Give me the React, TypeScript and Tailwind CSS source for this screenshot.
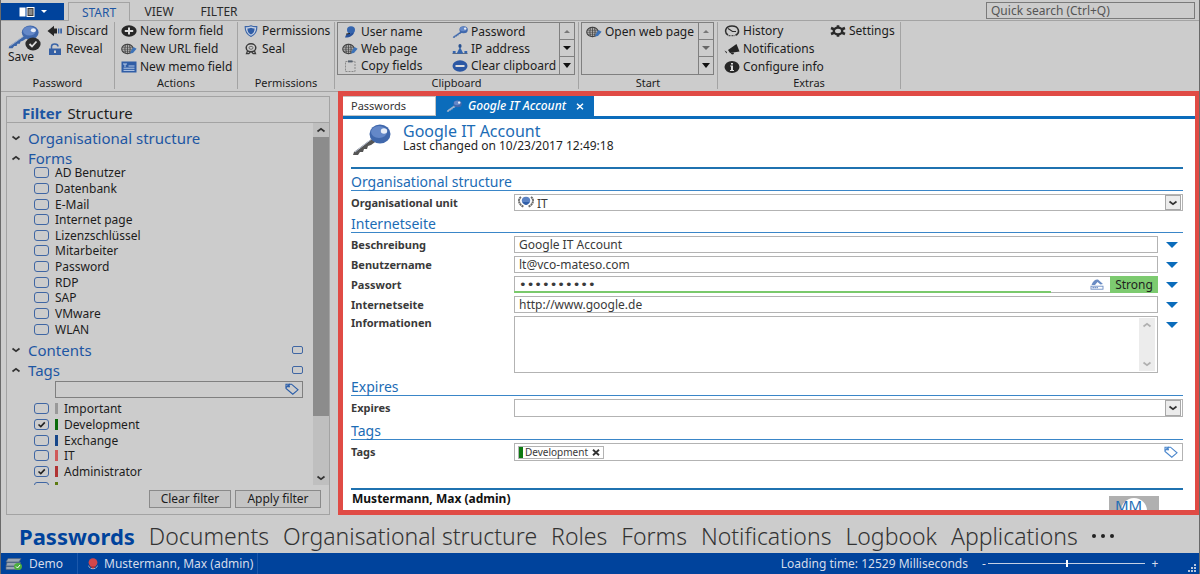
import { useState } from 'react';
import type { ReactNode } from 'react';
import clsx from 'clsx';

const FORMS = ['AD Benutzer', 'Datenbank', 'E-Mail', 'Internet page', 'Lizenzschlüssel', 'Mitarbeiter', 'Password', 'RDP', 'SAP', 'VMware', 'WLAN'];

const TAGS = [
    { name: 'Important', color: 'bg-[#999999]' },
    { name: 'Development', color: 'bg-[#0a6a0a]' },
    { name: 'Exchange', color: 'bg-[#17478a]' },
    { name: 'IT', color: 'bg-[#d05a5a]' },
    { name: 'Administrator', color: 'bg-[#b03333]' },
    { name: '', color: 'bg-[#5c7a10]' },
];

const MODULES = ['Passwords', 'Documents', 'Organisational structure', 'Roles', 'Forms', 'Notifications', 'Logbook', 'Applications'];

/* ---------- Icons ---------- */

function KeyIcon({ className, shaft = '#3c66a8' }: { className: string; shaft?: string }) {
    return (
        <svg viewBox="0 0 40 32" preserveAspectRatio="none" className={className} aria-hidden="true">
            <path d="M23 13 L3 28 L2 31 L7 31 L9 28 L12 28 L13 25 L16 25 L17 22 L20 21 L27 16 Z" fill={shaft} />
            <path d="M22 14 L4 28" stroke="#b9c3d6" strokeWidth="1" />
            <ellipse cx="29" cy="10" rx="10.5" ry="9.5" fill="#4068ac" />
            <ellipse cx="28" cy="8" rx="8" ry="6" fill="#6488c8" />
            <ellipse cx="33" cy="7" rx="3.2" ry="2.8" fill="#e8eef8" />
        </svg>
    );
}

function SaveIcon() {
    return (
        <span className="relative block h-6 w-8">
            <KeyIcon className="h-6 w-8" />
            <svg viewBox="0 0 16 14" className="absolute -right-0.5 -bottom-0.5 h-3.5 w-4" aria-hidden="true">
                <ellipse cx="8" cy="7" rx="7.6" ry="6.4" fill="#2b2b2b" />
                <path d="M4.5 7 L7 9.5 L11.5 4.5" fill="none" stroke="#dddddd" strokeWidth="1.8" />
            </svg>
        </span>
    );
}

function DiscardIcon() {
    return (
        <svg viewBox="0 0 16 12" className="h-3 w-4" aria-hidden="true">
            <path d="M0.5 6 L7 0.8 V3.5 H10 V8.5 H7 V11.2 Z" fill="#262626" />
            <path d="M11 3.5 H12.4 V8.5 H11 Z M13.2 3.5 H15 V8.5 H13.2 Z" fill="#3c66a8" />
        </svg>
    );
}

function LockIcon() {
    return (
        <svg viewBox="0 0 16 12" className="h-3 w-4" aria-hidden="true">
            <path d="M4.5 6 V3.5 C4.5 0.2 11 0.2 11 3.5" fill="none" stroke="#3c66a8" strokeWidth="1.5" />
            <rect x="2" y="5.5" width="12" height="6.5" fill="#3560a5" />
            <rect x="7" y="7.5" width="2" height="2.5" fill="#d0d0d0" />
        </svg>
    );
}

function PlusIcon() {
    return (
        <svg viewBox="0 0 16 12" preserveAspectRatio="none" className="h-3 w-4" aria-hidden="true">
            <ellipse cx="8" cy="6" rx="7.6" ry="5.8" fill="#262626" />
            <path d="M8 2.5 V9.5 M3.8 6 H12.2" stroke="#dddddd" strokeWidth="2" />
        </svg>
    );
}

function GlobeIcon() {
    return (
        <svg viewBox="0 0 16 12" className="h-3 w-4" aria-hidden="true">
            <ellipse cx="6.5" cy="6" rx="5.8" ry="4.6" fill="none" stroke="#444444" strokeWidth="1.1" />
            <ellipse cx="6.5" cy="6" rx="2.6" ry="4.6" fill="none" stroke="#444444" strokeWidth="0.9" />
            <path d="M1 4.2 H12 M0.8 6.2 H12 M1 8.2 H12 M6.5 1.4 V10.6" stroke="#444444" strokeWidth="0.8" />
            <path d="M9 10.6 L9.8 8 L12.5 4 L15.6 5.8 L12 10 Z" fill="#3c72b8" />
        </svg>
    );
}

function MemoIcon() {
    return (
        <svg viewBox="0 0 16 12" className="h-3 w-4" aria-hidden="true">
            <rect x="0.5" y="0.5" width="15" height="11" fill="#2f5da6" />
            <path d="M2 3 H6 M4 3 V6 M7.5 5 H13.5 M2.5 7.2 H13.5 M2.5 9.4 H13.5" stroke="#b8cbe8" strokeWidth="1" />
        </svg>
    );
}

function ShieldIcon() {
    return (
        <svg viewBox="0 0 14 12" className="h-3 w-3.5" aria-hidden="true">
            <path d="M7 0.7 C9 1.6 11 1.8 12.8 1.6 C13 6 11 9.5 7 11.5 C3 9.5 1 6 1.2 1.6 C3 1.8 5 1.6 7 0.7 Z" fill="#c8d2e4" stroke="#3c66a8" strokeWidth="1.1" />
            <path d="M7 2.8 C8.3 3.4 9.5 3.5 10.6 3.4 C10.6 6.3 9.5 8.3 7 9.6 C4.5 8.3 3.4 6.3 3.4 3.4 C4.5 3.5 5.7 3.4 7 2.8 Z" fill="#2f5da6" />
        </svg>
    );
}

function SealIcon() {
    return (
        <svg viewBox="0 0 14 12" className="h-3 w-3.5" aria-hidden="true">
            <ellipse cx="7" cy="4.8" rx="4.8" ry="4" fill="none" stroke="#3b3b3b" strokeWidth="1.5" />
            <ellipse cx="7" cy="4.8" rx="2" ry="1.5" fill="none" stroke="#555555" strokeWidth="0.8" />
            <path d="M3.5 8 L2.5 10.6 L4.8 10.6 L6.3 9 M10.5 8 L11.5 10.6 L9.2 10.6 L7.7 9" fill="none" stroke="#3b3b3b" strokeWidth="1.3" />
        </svg>
    );
}

function UserIcon() {
    return (
        <svg viewBox="0 0 16 12" className="h-3 w-4" aria-hidden="true">
            <ellipse cx="9" cy="4" rx="4" ry="3.7" fill="#3565ae" />
            <path d="M3 11.5 C4 8 6 7.2 8 7.6 L12 6.5 C11.5 9.5 8 11.6 3 11.5 Z" fill="#27509a" />
            <path d="M4 8.2 L8 7.4" stroke="#222222" strokeWidth="1" />
        </svg>
    );
}

function ClipboardIcon() {
    return (
        <svg viewBox="0 0 16 12" className="h-3 w-4" aria-hidden="true">
            <rect x="3.5" y="1.5" width="9.5" height="10" fill="none" stroke="#8a8a8a" strokeDasharray="2 1" />
            <rect x="6" y="0.4" width="4.5" height="2" fill="#55606e" />
        </svg>
    );
}

function IpIcon() {
    return (
        <svg viewBox="0 0 16 12" className="h-3 w-4" aria-hidden="true">
            <path d="M0.5 10.5 H15.5" stroke="#555555" strokeWidth="0.8" />
            <path d="M0.8 8 H3.6 V10.6 H0.8 Z M12.4 8 H15.2 V10.6 H12.4 Z M8 4 L11.4 10.8 H4.6 Z" fill="#3565ae" />
            <ellipse cx="8" cy="3" rx="1.6" ry="2" fill="#27508f" />
        </svg>
    );
}

function MinusIcon() {
    return (
        <svg viewBox="0 0 16 12" className="h-3 w-4" aria-hidden="true">
            <ellipse cx="8" cy="6" rx="7.5" ry="5.7" fill="#2c58a4" />
            <rect x="3.5" y="5" width="9" height="2" fill="#dddddd" />
        </svg>
    );
}

function HistoryIcon() {
    return (
        <svg viewBox="0 0 16 12" className="h-3 w-4" aria-hidden="true">
            <path d="M4 10 C0 7.5 1 1 8 1 C15 1 16.5 8 11.5 10.3" fill="none" stroke="#2e2e2e" strokeWidth="1.5" />
            <path d="M4 3.5 L8.5 6.5 L12 6.5" fill="none" stroke="#2e2e2e" strokeWidth="1.1" />
            <path d="M4.5 10.7 H11" stroke="#2e2e2e" strokeWidth="1" strokeDasharray="2 1" />
        </svg>
    );
}

function HornIcon() {
    return (
        <svg viewBox="0 0 16 12" className="h-3 w-4" aria-hidden="true">
            <path d="M4 7 L12.5 1 L15.5 8.5 L6 10 Z" fill="#242424" />
            <path d="M0.5 7.5 L3 9 L2.5 10.5 Z M6.5 10 L8 11.6 L10 11 L9.5 9.5 Z" fill="#242424" />
        </svg>
    );
}

function InfoIcon() {
    return (
        <svg viewBox="0 0 16 12" className="h-3 w-4" aria-hidden="true">
            <ellipse cx="8" cy="6" rx="7.5" ry="5.9" fill="#262626" />
            <path d="M7 2 H9 V3.6 H7 Z M6.2 4.6 H9 V9 H10 V10 H6 V9 H7 V5.6 H6.2 Z" fill="#dddddd" />
        </svg>
    );
}

function GearIcon() {
    return (
        <svg viewBox="0 0 16 12" className="h-3 w-4" aria-hidden="true">
            <ellipse cx="8" cy="6" rx="4.2" ry="3.4" fill="none" stroke="#2a2a2a" strokeWidth="2.4" />
            <path d="M8 0.2 V2.4 M8 9.6 V11.8 M1 3 L4 4.2 M15 3 L12 4.2 M1 9 L4 7.8 M15 9 L12 7.8" stroke="#2a2a2a" strokeWidth="2.6" />
        </svg>
    );
}

function TagIcon({ className }: { className: string }) {
    return (
        <svg viewBox="0 0 14 12" className={className} aria-hidden="true">
            <path d="M1 5.5 L1 1.2 L6.5 1.2 L13 6.8 L7.8 11.2 Z" fill="none" stroke="currentColor" strokeWidth="1.1" />
            <path d="M1 4.5 L5 1.2" stroke="currentColor" strokeWidth="1.6" />
            <circle cx="4" cy="3.6" r="1" fill="currentColor" />
        </svg>
    );
}

function OrgIcon() {
    return (
        <svg viewBox="0 0 16 12" className="h-3 w-4" aria-hidden="true">
            <ellipse cx="8" cy="4.6" rx="4.2" ry="3.8" fill="#5b83c4" />
            <path d="M4.6 6 C6 10 10 10 11.4 6 Z" fill="#315fa8" />
            <path d="M3 1 C0 3 0 8 5.5 10.6 M13 1 C16 3 16 8 10.5 10.6" fill="none" stroke="#6a6a6a" strokeWidth="2" strokeDasharray="2 0.5" />
        </svg>
    );
}

function Chevron({ up = false, className = 'text-[#333333]' }: { up?: boolean; className?: string }) {
    return (
        <svg viewBox="0 0 10 6" className={clsx('h-1.5 w-2.5', className)} aria-hidden="true">
            <path d={up ? 'M1.5 4.5 L5 1.8 L8.5 4.5' : 'M1.5 1.5 L5 4.2 L8.5 1.5'} fill="none" stroke="currentColor" strokeWidth="1.7" />
        </svg>
    );
}

function Triangle({ up = false, className }: { up?: boolean; className: string }) {
    return (
        <svg viewBox="0 0 12 6" preserveAspectRatio="none" className={className} aria-hidden="true">
            <path d={up ? 'M0 6 L6 0 L12 6 Z' : 'M0 0 L6 6 L12 0 Z'} fill="currentColor" />
        </svg>
    );
}

/* ---------- Ribbon ---------- */

function RibbonButton({ icon, children }: { icon: ReactNode; children: ReactNode }) {
    return (
        <button className="flex h-[18px] items-center gap-[3px] whitespace-nowrap text-left">
            <span className="flex w-4 justify-center">{icon}</span>
            {children}
        </button>
    );
}

function GalleryButton({ icon, children }: { icon: ReactNode; children: ReactNode }) {
    return (
        <button className="flex h-[17px] items-center gap-[3px] whitespace-nowrap text-left">
            <span className="flex w-4 justify-center">{icon}</span>
            {children}
        </button>
    );
}

function RibbonGroup({ title, className, children }: { title: string; className: string; children: ReactNode }) {
    return (
        <section className={clsx('mt-px mb-0.5 flex shrink-0 flex-col border-r border-[#a3a3a3]', className)}>
            <div className="h-[54px] shrink-0">{children}</div>
            <h2 className="text-center text-[11px] leading-[14px]">{title}</h2>
        </section>
    );
}

function GalleryScroll({ down }: { down: string }) {
    return (
        <div className="grid w-[15px] grid-rows-3 divide-y divide-[#7f7f7f] border-l border-[#7f7f7f]">
            <button aria-label="Scroll up" className="flex items-center justify-center"><Triangle up className="h-[3px] w-1.5 text-[#777777]" /></button>
            <button aria-label="Scroll down" className="flex items-center justify-center"><Triangle className={clsx('h-1 w-2', down)} /></button>
            <button aria-label="More" className="flex items-center justify-center"><Triangle className="h-[5px] w-2 text-[#111111]" /></button>
        </div>
    );
}

function Ribbon() {
    return (
        <div className="flex h-[71px] shrink-0 border-b border-[#a3a3a3] text-[12px] text-[#1c1c1c]">
            <RibbonGroup title="Password" className="w-[114px]">
                <div className="flex gap-2 pl-1.5">
                    <button className="flex flex-col items-center pt-[3px]">
                        <SaveIcon />
                        <span className="pr-1 leading-4">Save</span>
                    </button>
                    <div>
                        <RibbonButton icon={<DiscardIcon />}>Discard</RibbonButton>
                        <RibbonButton icon={<LockIcon />}>Reveal</RibbonButton>
                    </div>
                </div>
            </RibbonGroup>
            <RibbonGroup title="Actions" className="w-[123px]">
                <div className="pl-1.5">
                    <RibbonButton icon={<PlusIcon />}>New form field</RibbonButton>
                    <RibbonButton icon={<GlobeIcon />}>New URL field</RibbonButton>
                    <RibbonButton icon={<MemoIcon />}>New memo field</RibbonButton>
                </div>
            </RibbonGroup>
            <RibbonGroup title="Permissions" className="w-[97px]">
                <div className="pl-[5px]">
                    <RibbonButton icon={<ShieldIcon />}>Permissions</RibbonButton>
                    <RibbonButton icon={<SealIcon />}>Seal</RibbonButton>
                </div>
            </RibbonGroup>
            <RibbonGroup title="Clipboard" className="w-[244px]">
                <div className="mr-[3px] ml-0.5 flex h-[53px] border border-[#7f7f7f]">
                    <div className="grid flex-1 grid-cols-[110px_1fr] pl-1">
                        <GalleryButton icon={<UserIcon />}>User name</GalleryButton>
                        <GalleryButton icon={<KeyIcon className="h-3 w-4" />}>Password</GalleryButton>
                        <GalleryButton icon={<GlobeIcon />}>Web page</GalleryButton>
                        <GalleryButton icon={<IpIcon />}>IP address</GalleryButton>
                        <GalleryButton icon={<ClipboardIcon />}>Copy fields</GalleryButton>
                        <GalleryButton icon={<MinusIcon />}>Clear clipboard</GalleryButton>
                    </div>
                    <GalleryScroll down="text-[#111111]" />
                </div>
            </RibbonGroup>
            <RibbonGroup title="Start" className="w-[139px]">
                <div className="mr-[3px] ml-0.5 flex h-[53px] border border-[#7f7f7f]">
                    <div className="flex-1 pl-1">
                        <GalleryButton icon={<GlobeIcon />}>Open web page</GalleryButton>
                    </div>
                    <GalleryScroll down="text-[#666666]" />
                </div>
            </RibbonGroup>
            <RibbonGroup title="Extras" className="w-[183px]">
                <div className="grid grid-cols-[106px_1fr] pl-1.5">
                    <div>
                        <RibbonButton icon={<HistoryIcon />}>History</RibbonButton>
                        <RibbonButton icon={<HornIcon />}>Notifications</RibbonButton>
                        <RibbonButton icon={<InfoIcon />}>Configure info</RibbonButton>
                    </div>
                    <div>
                        <RibbonButton icon={<GearIcon />}>Settings</RibbonButton>
                    </div>
                </div>
            </RibbonGroup>
        </div>
    );
}

function TopBar() {
    return (
        <header className="flex h-[21px] shrink-0 items-end border-b border-[#a3a3a3] text-[12px]">
            <button aria-label="Application menu" className="flex h-[17px] w-[63px] items-center justify-center gap-1.5 bg-[#00439c] text-white">
                <svg viewBox="0 0 16 10" className="h-2.5 w-4" aria-hidden="true">
                    <rect x="0.5" y="0.5" width="6" height="9" fill="#ffffff" />
                    <rect x="8" y="0.5" width="7" height="9" fill="#3a3a3a" stroke="#ffffff" />
                    <path d="M9.5 3 H13.5 M9.5 5 H13.5 M9.5 7 H13.5" stroke="#ffffff" strokeWidth="0.8" />
                </svg>
                <Triangle className="h-[3px] w-1.5" />
            </button>
            <nav className="flex h-[18px] flex-1">
                <button className="-mb-px ml-1 h-[19px] w-[62px] border-x border-t border-[#a3a3a3] bg-[#cccccc] leading-[17px] text-[#1d56a3]">START</button>
                <button className="w-[58px] leading-[19px] text-[#2a2a2a]">VIEW</button>
                <button className="w-[62px] leading-[19px] text-[#2a2a2a]">FILTER</button>
            </nav>
            <input aria-label="Quick search" placeholder="Quick search (Ctrl+Q)" className="mr-1 mb-px h-[17px] w-[209px] border border-[#7a7a7a] px-1 text-[12px] outline-none placeholder:text-[#555555]" />
        </header>
    );
}

/* ---------- Filter sidebar ---------- */

function CheckRow({ label, color, checked, onChange }: { label: string; color?: string; checked: boolean; onChange: () => void }) {
    return (
        <label className="flex items-center">
            <span className="relative mr-1.5 flex">
                <input type="checkbox" aria-label={label || 'Untitled tag'} checked={checked} onChange={onChange} className="h-[11px] w-[15px] appearance-none rounded-[3px] border border-[#3f66a3]" />
                {checked && (
                    <svg viewBox="0 0 15 11" className="pointer-events-none absolute inset-0 h-[11px] w-[15px]" aria-hidden="true">
                        <path d="M4.5 5.5 L6.8 7.6 L10.8 3.4" fill="none" stroke="#222222" strokeWidth="1.6" />
                    </svg>
                )}
            </span>
            {color && <span className={clsx('mr-1.5 h-[11px] w-[3px]', color)} />}
            <span className="leading-[15px]">{label}</span>
        </label>
    );
}

function SectionTitle({ title, open = false, checkbox = false }: { title: string; open?: boolean; checkbox?: boolean }) {
    return (
        <div className="flex h-5 items-center pr-2.5">
            <button className="flex flex-1 items-center gap-[7px] text-left text-[15px] leading-5 text-[#1d56a3]">
                <Chevron up={open} />
                {title}
            </button>
            {checkbox && <input type="checkbox" aria-label={title} className="h-2 w-[11px] appearance-none rounded-[2px] border border-[#3f66a3]" />}
        </div>
    );
}

function Sidebar() {
    const [checked, setChecked] = useState<string[]>(['Development', 'Administrator']);

    const toggle = (name: string) => {
        setChecked((prev) => (prev.includes(name) ? prev.filter((n) => n !== name) : [...prev, name]));
    };

    return (
        <aside className="mt-1 flex w-[324px] shrink-0 flex-col border border-[#a3a3a3] text-[12px] text-[#1c1c1c]">
            <div className="flex h-[26px] shrink-0 items-end gap-1.5 border-b border-[#a3a3a3] pl-[15px] text-[15px] leading-[18px]">
                <button className="font-bold text-[#1d56a3]">Filter</button>
                <button>Structure</button>
            </div>
            <div className="flex min-h-0 flex-1">
                <div className="min-h-0 flex-1 overflow-hidden pt-[5px] pl-1">
                    <SectionTitle title="Organisational structure" />
                    <SectionTitle title="Forms" open />
                    <div className="-mt-[3px] grid h-[172px] auto-rows-fr pl-[23px]">
                        {FORMS.map((f) => <CheckRow key={f} label={f} checked={checked.includes(f)} onChange={() => toggle(f)} />)}
                    </div>
                    <div className="pt-[3px]">
                        <SectionTitle title="Contents" checkbox />
                        <SectionTitle title="Tags" open checkbox />
                    </div>
                    <div className="relative mr-2.5 ml-11 flex pt-px">
                        <input aria-label="Search tags" className="h-[17px] w-full border border-[#7f7f7f] px-1 outline-none" />
                        <TagIcon className="absolute top-[3px] right-1 h-3 w-3.5 text-[#2a5da8]" />
                    </div>
                    <div className="mt-[3px] grid h-[94px] auto-rows-fr pl-[23px]">
                        {TAGS.map((t) => <CheckRow key={t.name} label={t.name} color={t.color} checked={checked.includes(t.name)} onChange={() => toggle(t.name)} />)}
                    </div>
                </div>
                <div className="flex w-4 flex-col bg-[#bfbfbf]">
                    <button aria-label="Scroll up" className="flex h-[14px] items-center justify-center"><Chevron up /></button>
                    <div className="h-[279px] bg-[#8c8c8c]" />
                    <div className="flex-1" />
                    <button aria-label="Scroll down" className="flex h-[14px] items-center justify-center"><Chevron /></button>
                </div>
            </div>
            <div className="flex shrink-0 justify-end gap-1 pt-[5px] pr-2 pb-1.5">
                <button className="h-[18px] w-[82px] border border-[#8a8a8a] bg-[#c4c4c4] leading-4">Clear filter</button>
                <button className="h-[18px] w-[86px] border border-[#8a8a8a] bg-[#c4c4c4] leading-4">Apply filter</button>
            </div>
        </aside>
    );
}

/* ---------- Record form ---------- */

function FormHeading({ children }: { children: ReactNode }) {
    return <h3 className="border-b border-[#3a86c8] text-[14px] leading-4 text-[#1c6cb5]">{children}</h3>;
}

function Field({ id, label, menu = false, top = false, children }: { id: string; label: string; menu?: boolean; top?: boolean; children: ReactNode }) {
    return (
        <div className={clsx('flex', top ? 'items-start' : 'items-center')}>
            <label htmlFor={id} className="w-[163px] shrink-0 text-[11px] font-bold leading-[14px] text-[#3a3a3a]">{label}</label>
            <div className="relative flex min-w-0 flex-1">{children}</div>
            {menu && (
                <button type="button" aria-label={`${label} menu`} className={clsx('flex w-[25px] justify-center pl-0.5', top && 'pt-1.5')}>
                    <Triangle className="h-1.5 w-3 text-[#0b6cbb]" />
                </button>
            )}
        </div>
    );
}

function DropArrow() {
    return (
        <span className="pointer-events-none absolute top-px right-0.5 bottom-px flex w-4 items-center justify-center border border-[#a8a8a8] bg-[#ececec]">
            <Chevron />
        </span>
    );
}

const INPUT = 'min-w-0 flex-1 border border-[#b3b3b3] bg-white text-[#3a3a3a] outline-none';

function RecordForm() {
    return (
        <form className="flex min-h-0 flex-1 flex-col overflow-hidden pr-3 pl-2 text-[12px]" onSubmit={(e) => e.preventDefault()}>
            <div className="flex h-[50px] shrink-0 gap-3 border-b-2 border-[#1f72b0] pt-1">
                <KeyIcon className="mt-px h-8 w-10" shaft="#555555" />
                <div>
                    <h2 className="text-[16px] leading-4 text-[#1c6cb5]">Google IT Account</h2>
                    <p className="leading-[14px] text-[#1f1f1f]">Last changed on 10/23/2017 12:49:18</p>
                </div>
            </div>
            <div className="flex flex-col gap-[3px] pt-[5px]">
                <FormHeading>Organisational structure</FormHeading>
                <Field id="unit" label="Organisational unit">
                    <select id="unit" defaultValue="IT" className={clsx(INPUT, 'h-[17px] appearance-none pl-[22px]')}>
                        <option>IT</option>
                    </select>
                    <span className="pointer-events-none absolute top-0.5 left-1"><OrgIcon /></span>
                    <DropArrow />
                </Field>
            </div>
            <div className="flex flex-col gap-[3px] pt-[5px]">
                <FormHeading>Internetseite</FormHeading>
                <Field id="desc" label="Beschreibung" menu>
                    <input id="desc" defaultValue="Google IT Account" className={clsx(INPUT, 'h-[17px] px-1')} />
                </Field>
                <Field id="user" label="Benutzername" menu>
                    <input id="user" defaultValue="lt@vco-mateso.com" className={clsx(INPUT, 'h-[17px] px-1')} />
                </Field>
                <Field id="pass" label="Passwort" menu>
                    <input id="pass" type="password" autoComplete="off" defaultValue="abcdefghij" className={clsx(INPUT, "h-[17px] px-1 font-['DejaVu_Sans',sans-serif] text-[13px]")} />
                    <span className="absolute bottom-0 left-0 h-0.5 w-5/6 bg-[#7ac96c]" />
                    <button type="button" aria-label="Generate password" className="absolute top-0.5 right-[54px]">
                        <svg viewBox="0 0 14 12" className="h-3 w-3.5" aria-hidden="true">
                            <path d="M1.5 7 C3 2.5 6 1 8 1.5 L13 6 L10.5 6.5 L7.5 4 L5 7 Z" fill="#6a8cc4" />
                            <rect x="1" y="8.2" width="12" height="3" fill="none" stroke="#6a8cc4" strokeWidth="0.9" />
                            <path d="M2.5 9.7 H8" stroke="#6a8cc4" strokeWidth="1.2" strokeDasharray="1.4 0.6" />
                        </svg>
                    </button>
                    <span className="absolute inset-y-0 right-0 w-12 bg-[#7dcb70] text-center leading-[17px] text-[#1f1f1f]">Strong</span>
                </Field>
                <Field id="url" label="Internetseite" menu>
                    <input id="url" defaultValue="http://www.google.de" className={clsx(INPUT, 'h-[17px] px-1')} />
                </Field>
                <Field id="info" label="Informationen" menu top>
                    <textarea id="info" className={clsx(INPUT, 'h-[57px] resize-none px-1')} />
                    <div className="absolute top-0.5 right-[3px] bottom-0.5 flex w-4 flex-col items-center justify-between bg-[#ececec] py-1">
                        <Chevron up className="text-[#b0b0b0]" />
                        <Chevron className="text-[#b0b0b0]" />
                    </div>
                </Field>
            </div>
            <div className="flex flex-col gap-[3px] pt-1.5">
                <FormHeading>Expires</FormHeading>
                <Field id="expires" label="Expires">
                    <select id="expires" className={clsx(INPUT, 'h-[18px] appearance-none px-1')}>
                        <option></option>
                    </select>
                    <DropArrow />
                </Field>
            </div>
            <div className="flex flex-col gap-[3px] pt-1.5">
                <FormHeading>Tags</FormHeading>
                <Field id="tags" label="Tags">
                    <div className="flex h-[18px] flex-1 items-center border border-[#b3b3b3] pr-1 pl-[3px]">
                        <span className="flex h-[13px] items-center border border-[#b3b3b3] pr-[3px] text-[10px] leading-[11px] text-[#3a3a3a]">
                            <span className="mr-0.5 h-[11px] w-1 bg-[#0d7a12]" />
                            Development
                            <button type="button" aria-label="Remove tag" className="ml-1">
                                <svg viewBox="0 0 8 7" className="h-[7px] w-2" aria-hidden="true">
                                    <path d="M1 0.8 L7 6.2 M7 0.8 L1 6.2" stroke="#333333" strokeWidth="1.9" />
                                </svg>
                            </button>
                        </span>
                        <input id="tags" className="h-4 min-w-0 flex-1 px-1 outline-none" />
                        <TagIcon className="h-3 w-3.5 text-[#4a86cc]" />
                    </div>
                </Field>
            </div>
            <div className="mt-auto flex h-[22px] shrink-0 justify-between overflow-hidden border-t-2 border-[#1f72b0] pr-6">
                <span className="pt-0.5 pl-px font-bold leading-[14px] text-[#111111]">Mustermann, Max (admin)</span>
                <span className="relative mt-1.5 h-10 w-[50px] overflow-hidden bg-[#b0b0b0]">
                    <span className="absolute top-0.5 left-3 h-9 w-[26px] rounded-full bg-white" />
                    <span className="absolute top-0.5 left-1.5 text-[15px] leading-[15px] text-[#1c6cb5]">MM</span>
                </span>
            </div>
        </form>
    );
}

function RecordPane() {
    return (
        <main className="-mt-px flex min-w-0 flex-1 flex-col border-[5px] border-[#e04b45] bg-white">
            <div className="flex h-[23px] shrink-0 items-stretch border-b-[3px] border-[#0b6cbb]">
                <button className="w-[93px] border-y border-r border-[#c4c4c4] pl-2 text-left text-[11px] text-[#333333]">Passwords</button>
                <div className="flex w-[158px] items-center gap-1.5 bg-[#0b6cbb] pl-2.5 text-[12px] text-white">
                    <KeyIcon className="h-3 w-4" shaft="#9fb2cc" />
                    <span className="flex-1 whitespace-nowrap font-medium italic">Google IT Account</span>
                    <button aria-label="Close tab" className="pr-2.5">
                        <svg viewBox="0 0 8 7" className="h-[7px] w-2" aria-hidden="true">
                            <path d="M1 0.8 L7 6.2 M7 0.8 L1 6.2" stroke="#ffffff" strokeWidth="1.5" />
                        </svg>
                    </button>
                </div>
            </div>
            <RecordForm />
        </main>
    );
}

/* ---------- Footer ---------- */

function ModuleBar() {
    return (
        <nav className="flex h-[38px] shrink-0 items-center gap-3.5 overflow-hidden pt-1 pl-[18px] leading-8 whitespace-nowrap">
            {MODULES.map((m, i) => (
                <a key={m} href="#" className={i === 0 ? 'text-[22px] font-bold text-[#00439c]' : 'text-[23px] font-light text-[#333333]'}>{m}</a>
            ))}
            <button aria-label="More modules" className="flex gap-[5px]">
                <span className="h-1 w-1 rounded-full bg-[#222222]" />
                <span className="h-1 w-1 rounded-full bg-[#222222]" />
                <span className="h-1 w-1 rounded-full bg-[#222222]" />
            </button>
        </nav>
    );
}

function StatusBar() {
    return (
        <footer className="relative flex h-[21px] shrink-0 items-center bg-[#00439c] text-[12px] text-[#d5dcea]">
            <div className="flex h-full w-[77px] items-center gap-[7px] border-r border-[#1c58ab] pl-1">
                <svg viewBox="0 0 17 12" className="h-3 w-[17px]" aria-hidden="true">
                    <path d="M3 0.5 H16 L14 4 H1 Z M2 4.5 H15.5 L14 8 H1 Z M1 8.5 H15 V11.5 H1 Z" fill="#9aa6b4" stroke="#54657c" strokeWidth="0.7" />
                    <ellipse cx="13" cy="8.5" rx="4" ry="3.5" fill="#4cae3e" />
                    <path d="M11 8.5 L12.5 10 L15 7" fill="none" stroke="#ffffff" strokeWidth="1" />
                </svg>
                Demo
            </div>
            <div className="flex h-full items-center gap-[5px] border-r border-[#1c58ab] pr-1 pl-[9px]">
                <svg viewBox="0 0 12 12" className="h-3 w-3" aria-hidden="true">
                    <path d="M1 7 C2 12.5 10 12.5 11 7 L8.5 10 H3.5 Z" fill="#cfd4dc" />
                    <ellipse cx="6" cy="4.5" rx="4.4" ry="4.3" fill="#d3474a" />
                    <path d="M3 8 H9 L6 11 Z" fill="#b73538" />
                </svg>
                Mustermann, Max (admin)
            </div>
            <div className="ml-auto flex items-center pr-10">
                <span className="mr-3">Loading time: 12529 Milliseconds</span>
                <button aria-label="Zoom out" className="w-2">-</button>
                <input
                    type="range"
                    aria-label="Zoom"
                    defaultValue={50}
                    className="h-3 w-[157px] appearance-none bg-transparent [&::-webkit-slider-runnable-track]:h-px [&::-webkit-slider-runnable-track]:bg-[#c5d0e4] [&::-webkit-slider-thumb]:-mt-[3px] [&::-webkit-slider-thumb]:h-[7px] [&::-webkit-slider-thumb]:w-0.5 [&::-webkit-slider-thumb]:appearance-none [&::-webkit-slider-thumb]:bg-white"
                />
                <button aria-label="Zoom in" className="ml-1.5 w-2">+</button>
            </div>
            <svg viewBox="0 0 9 8" className="absolute right-0.5 bottom-0.5 h-2 w-[9px]" aria-hidden="true">
                <path d="M6 0 H8 V2 H6 Z M3 3 H5 V5 H3 Z M6 3 H8 V5 H6 Z M0 6 H2 V8 H0 Z M3 6 H5 V8 H3 Z M6 6 H8 V8 H6 Z" fill="#b9c6dd" />
            </svg>
        </footer>
    );
}

export default function App() {
    return (
        <div className="flex h-screen flex-col overflow-hidden border-x border-[#6a6a6a] bg-[#cccccc] font-['Noto_Sans',sans-serif]">
            <TopBar />
            <Ribbon />
            <div className="-mr-px flex min-h-0 flex-1 gap-2 pl-[5px]">
                <Sidebar />
                <RecordPane />
            </div>
            <ModuleBar />
            <StatusBar />
        </div>
    );
}
